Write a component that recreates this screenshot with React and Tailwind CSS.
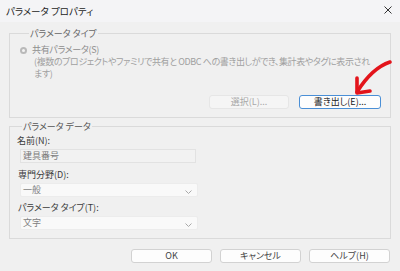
import React from 'react';

const font = { fontFamily: '"Noto Sans CJK JP", "Noto Sans", sans-serif' };

const Chevron = () => (
  <svg width="7" height="4" viewBox="0 0 7 4" className="absolute right-[5px] top-[6px]">
    <polyline points="0.5,0.5 3.5,3.5 6.5,0.5" fill="none" stroke="#a8a8a8" strokeWidth="1" />
  </svg>
);

const Select = ({ value }) => (
  <div className="relative ml-[3px] mt-[2px] h-[14px] w-[178px] rounded-[2px] bg-[#f9f9f9] border border-[#ececec] pl-[2px] text-[9px] leading-[12px] text-[#808080]">
    {value}
    <Chevron />
  </div>
);

const Button = ({ children, disabled, primary, className = '' }) => (
  <button
    disabled={disabled}
    className={`h-[14px] rounded-[3px] border text-[9px] leading-[12px] ${
      disabled
        ? 'bg-[#f5f5f5] border-[#e6e6e6] text-[#a8a8a8]'
        : primary
        ? 'bg-[#fdfdfd] border-[#4a8fd6] text-[#222]'
        : 'bg-[#fdfdfd] border-[#d2d2d2] text-[#444]'
    } ${className}`}
  >
    {children}
  </button>
);

export default function App() {
  return (
    <div
      className="relative w-[400px] h-[271px] overflow-hidden bg-[#f0f0f0] [font-feature-settings:'palt']"
      style={font}
    >
      {/* タイトルバー */}
      <div className="flex h-[22px] items-center justify-between bg-[#f4f4f6] pl-[6px] pr-[8px]">
        <span className="text-[9.5px] leading-[12px] text-[#1c1c1c]">パラメータ プロパティ</span>
        <svg width="8" height="8" viewBox="0 0 8 8" className="mt-[-2px]">
          <path d="M0.5 0.5 L7.5 7.5 M7.5 0.5 L0.5 7.5" stroke="#333" strokeWidth="1" />
        </svg>
      </div>

      <div className="px-[9px]">
        {/* パラメータ タイプ */}
        <fieldset className="mt-[6px] min-w-0 border border-[#dadada] pl-[10px] pr-[9px] pb-[8px]">
          <legend className="ml-[9px] px-[1px] text-[9px] leading-[11px] text-[#666]">パラメータ タイプ</legend>
          <div className="mt-[5px] flex h-[12px] items-center">
            <span className="flex h-[7px] w-[7px] items-center justify-center rounded-full bg-[#b9b9b9]">
              <span className="h-[3px] w-[3px] rounded-full bg-[#f3f3f3]" />
            </span>
            <span className="ml-[5px] text-[9px] leading-[12px] tracking-[-0.3px] text-[#8e8e8e]">共有パラメータ(S)</span>
          </div>
          <div className="ml-[14px] text-[9px] leading-[12px] tracking-[-0.4px] text-[#a0a0a0] whitespace-nowrap">
            (複数のプロジェクトやファミリで共有と ODBC への書き出しができ、集計表やタグに表示され
            <br />
            ます)
          </div>
          <div className="mt-[15px] flex justify-end gap-[10px]">
            <Button disabled className="w-[80px]">選択(L)...</Button>
            <Button primary className="w-[82px]">書き出し(E)...</Button>
          </div>
        </fieldset>

        {/* パラメータ データ */}
        <fieldset className="mt-[3px] min-w-0 border border-[#dadada] pl-[7px] pt-[3px] pb-[8px]">
          <legend className="ml-[5px] px-[1px] text-[9px] leading-[11px] text-[#555]">パラメータ データ</legend>
          <div className="text-[9px] leading-[12px] text-[#3a3a3a]">名前(N):</div>
          <div className="ml-[3px] mt-[2px] h-[14px] w-[176px] bg-[#f2f2f2] border border-[#e2e2e2] pl-[2px] text-[9px] leading-[12px] text-[#7a7a7a]">
            建具番号
          </div>
          <div className="mt-[6px] ml-[1px] text-[9px] leading-[12px] text-[#3a3a3a]">専門分野(D):</div>
          <Select value="一般" />
          <div className="mt-[5px] ml-[1px] text-[9px] leading-[12px] text-[#3a3a3a]">パラメータ タイプ(T):</div>
          <Select value="文字" />
        </fieldset>

        <div className="mt-[10px] flex justify-end gap-[8px] pr-[1px]">
          <Button className="w-[81px]">OK</Button>
          <Button className="w-[81px]">キャンセル</Button>
          <Button className="w-[81px]">ヘルプ(H)</Button>
        </div>
      </div>

      {/* 赤い矢印 */}
      <svg width="52" height="42" viewBox="0 0 52 42" className="absolute left-[348px] top-[56px]">
        <path d="M42 6 Q24 12 9 36" fill="none" stroke="#e3141b" strokeWidth="3.6" strokeLinecap="round" />
        <path d="M9 22 L9 37 L22 35" fill="none" stroke="#e3141b" strokeWidth="3.6" strokeLinecap="round" strokeLinejoin="round" />
      </svg>
    </div>
  );
}
